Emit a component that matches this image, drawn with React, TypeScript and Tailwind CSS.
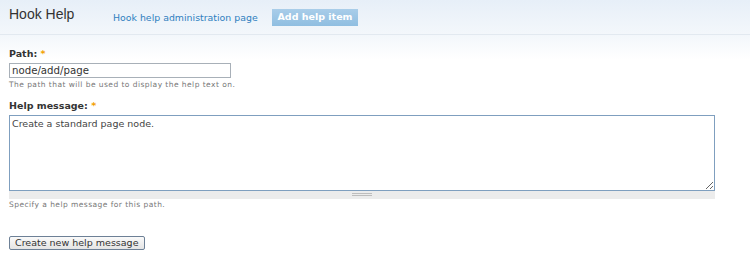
export default function App() {
  return (
    <div className="w-[750px] h-[267px] bg-white font-['DejaVu_Sans',sans-serif] text-[#333]">
      {/* Header */}
      <div className="h-[35px] border-b border-[#e2e9f0] bg-gradient-to-b from-[#e7eff8] to-[#f3f7fb] flex items-end pl-[9px]">
        <h1 className="font-['Liberation_Sans',sans-serif] text-[14px] leading-none font-normal text-[#333] w-[104px] pb-[13px]">
          Hook Help
        </h1>
        <a className="text-[9.4px] leading-none text-[#2f7fbf] w-[159px] pb-[12px]">
          Hook help administration page
        </a>
        <div className="mb-[8px] h-[17px] w-[86px] bg-gradient-to-b from-[#a9cde9] to-[#8fbee1] flex items-center justify-center text-white font-bold text-[9.5px]">
          Add help item
        </div>
      </div>
      <div className="h-[25px] -mb-[25px] bg-gradient-to-b from-[#f3f7fb] to-white" />

      {/* Form */}
      <div className="relative px-[9px] pt-[14px]">
        <label className="block text-[9.5px] font-bold leading-none">
          Path: <span className="text-[#f2a000]">*</span>
        </label>
        <input
          defaultValue="node/add/page"
          className="mt-[4px] block w-[222px] h-[15px] border border-[#a8b0b8] px-[2px] text-[10.2px] leading-none text-[#333] outline-none"
        />
        <div className="mt-[3px] text-[7.5px] leading-none text-[#777] tracking-[0.45px]">
          The path that will be used to display the help text on.
        </div>

        <label className="mt-[13px] block text-[9.5px] font-bold leading-none">
          Help message: <span className="text-[#f2a000]">*</span>
        </label>
        <div className="mt-[4px] w-[706px]">
          <textarea
            defaultValue="Create a standard page node."
            className="block w-full h-[76px] border border-[#7f9fbf] px-[2px] py-[1px] text-[9.5px] leading-[14px] text-[#444] outline-none"
          />
          <div className="h-[8px] bg-[#ececec] flex items-center justify-center">
            <div className="w-[20px] h-[3px] border-y border-[#bdbdbd]" />
          </div>
        </div>
        <div className="mt-[2px] text-[7.5px] leading-none text-[#777] tracking-[0.45px]">
          Specify a help message for this path.
        </div>

        <button className="mt-[28px] block h-[14px] px-[5px] border border-[#6d8096] rounded-[2px] bg-gradient-to-b from-[#fafafa] to-[#e4e4e4] text-[9.5px] leading-none text-[#333]">
          Create new help message
        </button>
      </div>
    </div>
  );
}
